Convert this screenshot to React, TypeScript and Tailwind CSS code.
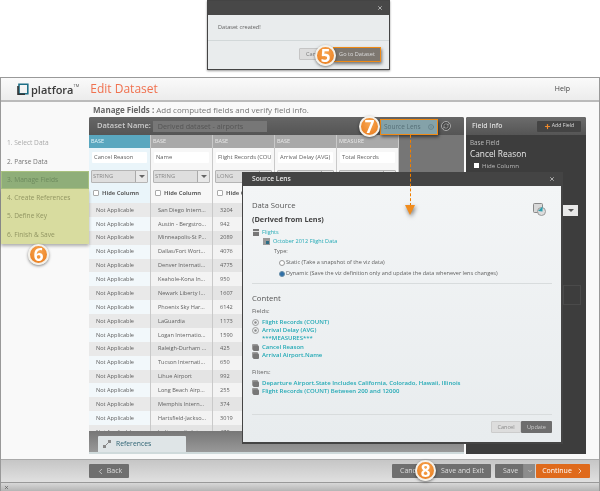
import { ChevronLeft, ChevronRight, ChevronDown, Plus, X, Info, RefreshCw } from "lucide-react";

const airports = [
  ["San Diego Intern...", "3204"],
  ["Austin - Bergstro...", "942"],
  ["Minneapolis-St P...", "2089"],
  ["Dallas/Fort Wort...", "4076"],
  ["Denver Internati...", "4775"],
  ["Keahole-Kona In...", "950"],
  ["Newark Liberty I...", "1607"],
  ["Phoenix Sky Har...", "6142"],
  ["LaGuardia", "1173"],
  ["Logan Internatio...", "1590"],
  ["Raleigh-Durham ...", "425"],
  ["Tucson Internati...", "650"],
  ["Lihue Airport", "992"],
  ["Long Beach Airp...", "255"],
  ["Memphis Intern...", "374"],
  ["Hartsfield-Jackso...", "3019"],
  ["Indianapolis Inte...", "478"],
];

const Badge = ({ n, className }: { n: number; className: string }) => (
  <div
    className={`absolute z-30 flex h-[21px] w-[21px] items-center justify-center rounded-full border-2 border-[#f4f1ea] bg-[radial-gradient(circle_at_50%_35%,#f8a651,#e8791a)] text-[17px] leading-none font-bold text-white shadow-[0_1px_3px_rgba(0,0,0,0.5)] ${className}`}
  >
    {n}
  </div>
);

const Stack = () => (
  <svg width="7" height="7" viewBox="0 0 7 7" className="shrink-0">
    <rect x="0" y="0" width="6" height="6" rx="1" fill="#9a9a9a" />
    <rect x="1" y="1.5" width="6" height="5.5" rx="1" fill="#777" />
  </svg>
);

const Measure = () => (
  <svg width="7" height="7" viewBox="0 0 7 7" className="shrink-0">
    <circle cx="3.5" cy="3.5" r="3" fill="none" stroke="#888" strokeWidth="0.8" />
    <circle cx="3.5" cy="3.5" r="1.2" fill="#888" />
  </svg>
);

const Column = ({ kind, name, type, active, cells }: { kind: string; name: string; type: string; active?: boolean; cells: string[] }) => (
  <div className={`flex w-[62px] shrink-0 flex-col border-r border-[#c9c9c9] ${active ? "bg-[#eaf5fa]" : "bg-[#f7f7f7]"}`}>
    <div className={`flex h-[13px] shrink-0 items-center px-[2px] text-[5.5px] ${active ? "bg-[#5aa7bf] text-[#e6f5f9]" : "bg-[#a9a9a9] text-[#e8e8e8]"}`}>
      {kind}
    </div>
    <div className="h-[4px] shrink-0" />
    <div className="mx-[3px] flex h-[11px] shrink-0 items-center overflow-hidden rounded-[1px] bg-white px-[2px] text-[5.8px] whitespace-nowrap text-[#5f5f5f]">
      {name}
    </div>
    <div className="h-[7px] shrink-0" />
    <div className="mx-[2px] flex h-[13px] shrink-0 items-center justify-between rounded-[1px] border border-[#b5b5b5] bg-[#dedede] pl-[1px] text-[5.8px] text-[#888]">
      {type}
      <span className="flex h-full w-[12px] items-center justify-center border-l border-[#aaa] bg-[#e8e8e8]">
        <span className="h-0 w-0 border-x-[3px] border-t-[3px] border-x-transparent border-t-[#666]" />
      </span>
    </div>
    <div className="flex h-[20px] shrink-0 items-center gap-[3px] px-[4px] text-[5.8px] font-bold text-[#5f5f5f]">
      <span className="h-[6px] w-[6px] rounded-[1px] border border-[#aaa] bg-white" />
      Hide Column
    </div>
    {cells.map((c, i) => (
      <div
        key={i}
        className={`flex h-[13.875px] shrink-0 items-center overflow-hidden pl-[7px] text-[5.6px] whitespace-nowrap text-[#5f5f5f] ${
          i % 2 === 0 ? (active ? "bg-[#e9e9e9]" : "bg-[#e4e4e4]") : active ? "bg-[#f2f8fb]" : "bg-[#f3f3f3]"
        }`}
      >
        {c}
      </div>
    ))}
  </div>
);

export default function App() {
  return (
    <div className="relative flex h-[491px] w-[600px] flex-col overflow-hidden bg-white font-['Open_Sans',sans-serif] blur-[0.4px]">
      {/* created dialog */}
      <div className="flex h-[77px] shrink-0 pl-[207px]">
        <div className="relative flex h-[70px] w-[183px] flex-col border border-[#444] bg-[#e9eced] shadow-[0_1px_2px_rgba(0,0,0,0.4)]">
          <div className="flex h-[14px] items-center justify-end bg-[#484848] pr-[6px]">
            <X size={6} className="text-[#ccc]" strokeWidth={3} />
          </div>
          <div className="flex h-[26px] items-center border-b border-[#d2d8d9] pl-[10px] text-[5.6px] text-[#5f5f5f]">Dataset created!</div>
          <div className="flex flex-1 items-start justify-end gap-[3px] pt-[6px] pr-[8px]">
            <div className="mt-[1px] flex h-[12px] w-[31px] items-center rounded-[1px] border border-[#c5c5c5] bg-[#ddd] pl-[6px] text-[5.6px] text-[#777]">Can</div>
            <div className="flex h-[15px] w-[48px] items-center justify-center border-[1.5px] border-[#f08a14] bg-[#7d7770] text-[5.6px] text-[#ddd] shadow-[1px_2px_3px_rgba(0,0,0,0.5)]">
              Go to Dataset
            </div>
          </div>
          <Badge n={5} className="top-[44px] left-[107px]" />
        </div>
      </div>

      {/* app window */}
      <div className="relative flex min-h-0 flex-1 flex-col border-x border-t border-[#999] bg-[#f9f9f9]">
        <header className="flex h-[24px] shrink-0 items-center justify-between border-b-2 border-[#bbb] bg-gradient-to-b from-[#fafafa] to-[#ececec] pr-[29px] pl-[16px]">
          <div className="flex items-center">
            <svg width="12" height="12" viewBox="0 0 12 12" className="mr-[2px]">
              <path d="M2 1.2H10.8V10.8H2Z" fill="none" stroke="#1e6f86" strokeWidth="1.6" />
              <path d="M1 3V11.2H8" fill="none" stroke="#333" strokeWidth="1.6" />
            </svg>
            <span className="text-[11px] leading-none font-semibold text-[#3a3a3a]">platfora</span>
            <span className="mb-[6px] text-[4px] text-[#555]">TM</span>
            <span className="ml-[11px] text-[12px] text-[#f0714f]">Edit Dataset</span>
          </div>
          <span className="text-[7px] text-[#444]">Help</span>
        </header>

        <div className="flex h-[357px] shrink-0">
          {/* steps */}
          <nav className="relative flex w-[88px] shrink-0 flex-col pt-[31px] text-[6.6px] text-[#8b8b8b]">
            <div className="flex h-[19px] shrink-0 items-center pl-[6px] text-[#aaa]">1. Select Data</div>
            <div className="flex h-[19px] shrink-0 items-center pl-[6px] text-[#777]">2. Parse Data</div>
            <div className="flex h-[18px] shrink-0 items-center border border-[#a9c17f] bg-[#8fae79] pl-[5px] text-[#6d8a5e]">3. Manage Fields</div>
            <div className="flex h-[55px] shrink-0 flex-col bg-[#d8dc9f] pl-[6px] text-[#919562] shadow-[0_2px_3px_rgba(0,0,0,0.3)]">
              <span className="flex h-[18px] items-center">4. Create References</span>
              <span className="flex h-[18px] items-center">5. Define Key</span>
              <span className="flex h-[19px] items-center">6. Finish &amp; Save</span>
            </div>
            <Badge n={6} className="top-[142px] left-[27px]" />
          </nav>

          {/* main */}
          <main className="flex min-h-0 min-w-0 flex-1 flex-col">
            <div className="flex h-[15px] shrink-0 items-center pl-[4px] text-[8px] whitespace-nowrap text-[#777]">
              <b className="mr-[2px] font-bold text-[#666]">Manage Fields :</b> Add computed fields and verify field info.
            </div>
            <div className="flex min-h-0 flex-1 gap-[2px] pb-[5px]">
              {/* dataset panel */}
              <section className="flex min-h-0 w-[375px] shrink-0 flex-col rounded-t-[2px] bg-[#767676]">
                <div className="relative flex h-[18px] shrink-0 items-center rounded-t-[2px] bg-gradient-to-b from-[#666] to-[#555] pl-[8px] text-[7.5px] font-semibold text-[#ccc]">
                  Dataset Name:
                  <span className="ml-[2px] flex h-[11px] w-[114px] items-center bg-[#777] pl-[5px] text-[7.2px] font-normal text-[#555]">Derived dataset - airports</span>
                  <div className="absolute top-[2px] left-[291px] flex h-[16px] w-[58px] items-center gap-[7px] border-[1.5px] border-[#f08a14] bg-[#84a2a9] pl-[3px] text-[6.5px] font-normal whitespace-nowrap text-[#567078] shadow-[1px_2px_3px_rgba(0,0,0,0.5)]">
                    Source Lens
                    <Info size={6} className="text-[#567078]" />
                  </div>
                  <span className="absolute top-[4px] left-[352px] flex h-[10px] w-[10px] items-center justify-center rounded-full border border-[#aaa] bg-[#444]">
                    <RefreshCw size={6} className="text-[#ccc]" />
                  </span>
                </div>
                <div className="flex min-h-0 flex-1 overflow-hidden">
                  <Column kind="BASE" name="Cancel Reason" type="STRING" active cells={airports.map(() => "Not Applicable")} />
                  <Column kind="BASE" name="Name" type="STRING" cells={airports.map((a) => a[0])} />
                  <Column kind="BASE" name="Flight Records (COU" type="LONG" cells={airports.map((a) => a[1])} />
                  <Column kind="BASE" name="Arrival Delay (AVG)" type="LONG" cells={[]} />
                  <Column kind="MEASURE" name="Total Records" type="LONG" cells={[]} />
                </div>
                <div className="flex h-[23px] shrink-0 items-end border-b-2 border-[#cfdadb] bg-gradient-to-b from-[#777] to-[#999] pl-[9px]">
                  <div className="flex h-[16px] w-[88px] items-center gap-[5px] rounded-t-[1px] bg-[#dfe5e7] pl-[5px] text-[6.8px] text-[#2f6474]">
                    <svg width="8" height="8" viewBox="0 0 8 8">
                      <rect x="0" y="5" width="3" height="3" fill="#888" />
                      <rect x="5" y="0" width="3" height="3" fill="#888" />
                      <path d="M2 6L6 2" stroke="#888" />
                    </svg>
                    References
                  </div>
                </div>
              </section>

              {/* field info */}
              <aside className="flex w-[120px] shrink-0 flex-col rounded-t-[2px] bg-[#3d3d3d] text-[#ddd]">
                <div className="flex h-[18px] shrink-0 items-center justify-between rounded-t-[2px] bg-gradient-to-b from-[#6c6c6c] to-[#555] pr-[5px] pl-[6px] text-[6.8px] font-semibold">
                  Field Info
                  <span className="flex h-[11px] w-[44px] items-center justify-center gap-[1px] rounded-[1px] bg-[#444] text-[5.2px] font-normal">
                    <Plus size={7} strokeWidth={4} className="text-[#f08a2b]" />
                    Add Field
                  </span>
                </div>
                <div className="px-[4px] pt-[3px]">
                  <p className="text-[6.3px] leading-[10px] text-[#bbb]">Base Field</p>
                  <p className="text-[8.3px] leading-[11px] text-[#e8e8e8]">Cancel Reason</p>
                  <p className="mt-[2px] flex items-center gap-[3px] pl-[4px] text-[6.1px] leading-[9px] text-[#bbb]">
                    <span className="h-[5px] w-[5px] bg-white" />
                    Hide Column
                  </p>
                </div>
              </aside>
            </div>
          </main>
        </div>

        <footer className="flex h-[23px] shrink-0 items-center justify-between border-t border-[#aaa] bg-gradient-to-b from-[#c6c6c6] to-[#e0e0e0] pr-[9px] pl-[88px] text-[7px] text-[#ddd]">
          <div className="flex h-[14px] w-[40px] items-center justify-center gap-[2px] rounded-[1px] bg-[#6f6f6f]">
            <ChevronLeft size={9} />
            Back
          </div>
          <div className="flex items-center">
            <div className="flex h-[14px] w-[99px] items-center rounded-[1px] bg-[#6f6f6f] pl-[8px] whitespace-nowrap">
              Canc
              <span className="ml-[25px]">Save and Exit</span>
            </div>
            <div className="ml-[4px] flex h-[14px] w-[40px] items-center rounded-[1px] bg-[#6f6f6f] pl-[8px]">
              Save
              <span className="ml-[5px] flex h-full flex-1 items-center justify-center border-l border-[#888] bg-[#8c8c8c]">
                <ChevronDown size={6} />
              </span>
            </div>
            <div className="ml-[1px] flex h-[14px] w-[54px] items-center justify-center gap-[4px] rounded-[1px] bg-[#df6a1c] text-white">
              Continue
              <ChevronRight size={8} />
            </div>
          </div>
        </footer>
        <div className="flex flex-1 items-center border-t border-[#999] bg-gradient-to-b from-[#d8d8d8] to-[#b5b5b5] pl-[3px]">
          <X size={5} className="text-[#555]" strokeWidth={3} />
        </div>
      </div>

      <Badge n={7} className="top-[116px] left-[359px]" />
      <Badge n={8} className="top-[460px] left-[415px]" />

      {/* source lens modal */}
      <div className="absolute top-[172px] left-[242px] z-10 flex h-[272px] w-[321px] flex-col bg-[#444] pr-[2px] pb-[2px] pl-[1px]">
        <div className="flex h-[14px] shrink-0 items-center justify-between pr-[6px] pl-[9px] text-[6.7px] font-semibold text-[#e8e8e8]">
          Source Lens
          <X size={6} className="text-[#ccc]" strokeWidth={3} />
        </div>
        <div className="relative flex flex-1 flex-col bg-gradient-to-b from-[#f3f5f6] to-[#e8ecee] px-[9px] pt-[14px] text-[5.55px] text-[#5f5f5f]">
          <p className="text-[7.7px] leading-[11px] text-[#555]">Data Source</p>
          <p className="mt-[3px] text-[7.3px] leading-[11px] font-bold text-[#444]">(Derived from Lens)</p>
          <p className="mt-[3px] flex h-[9px] items-center gap-[3px] pl-[1px] text-[#22a9b5]">
            <svg width="6" height="7" viewBox="0 0 6 7"><rect width="6" height="7" fill="#777" /><rect y="2" width="6" height="1" fill="#ddd" /></svg>
            Flights
          </p>
          <p className="flex h-[9px] items-center gap-[3px] pl-[11px] text-[#22a9b5]">
            <svg width="7" height="7" viewBox="0 0 7 7"><rect width="7" height="7" fill="#999" /><rect x="3" y="3" width="3" height="3" fill="#2c6d85" /></svg>
            October 2012 Flight Data
          </p>
          <p className="flex h-[10px] items-center pl-[22px]">Type:</p>
          <div className="mt-[1px] flex h-[11px] items-center pl-[27px] whitespace-nowrap">
            <span className="mr-[1px] h-[6px] w-[6px] rounded-full border border-[#999] bg-white" />
            Static (Take a snapshot of the viz data)
          </div>
          <div className="flex h-[11px] items-center pl-[27px] whitespace-nowrap">
            <span className="mr-[1px] h-[6px] w-[6px] rounded-full border border-[#6a8fa8] bg-[#2f6fa8]" />
            Dynamic (Save the viz definition only and update the data whenever lens changes)
          </div>
          <hr className="mt-[4px] border-[#d8dcdd]" />
          <p className="mt-[9px] text-[7.7px] leading-[11px] text-[#555]">Content</p>
          <p className="mt-[3px] text-[6px] leading-[9px]">Fields:</p>
          <ul className="mt-[2px] text-[6px] font-semibold text-[#22a9b5]">
            <li className="flex h-[8.3px] items-center gap-[3px]"><Measure />Flight Records (COUNT)</li>
            <li className="flex h-[8.3px] items-center gap-[3px]"><Measure />Arrival Delay (AVG)</li>
            <li className="flex h-[8.3px] items-center pl-[10px]">***MEASURES***</li>
            <li className="flex h-[8.3px] items-center gap-[3px]"><Stack />Cancel Reason</li>
            <li className="flex h-[8.3px] items-center gap-[3px]"><Stack />Arrival Airport.Name</li>
          </ul>
          <p className="mt-[9px] text-[6px] leading-[9px]">Filters:</p>
          <ul className="mt-[2px] text-[6px] font-semibold text-[#22a9b5]">
            <li className="flex h-[8.3px] items-center gap-[3px]"><Stack />Departure Airport.State Includes California, Colorado, Hawaii, Illinois</li>
            <li className="flex h-[8.3px] items-center gap-[3px]"><Stack />Flight Records (COUNT) Between 200 and 12000</li>
          </ul>
          <hr className="mt-[18px] border-[#d8dcdd]" />
          <div className="mt-[6px] flex justify-end">
            <span className="flex h-[12px] w-[30px] items-center justify-center rounded-[1px] border border-[#ccc] bg-[#ddd] text-[#888]">Cancel</span>
            <span className="flex h-[12px] w-[31px] items-center justify-center rounded-[1px] bg-[#6d6d6d] text-[#ccc]">Update</span>
          </div>
          <svg width="13" height="13" viewBox="0 0 13 13" className="absolute top-[17px] right-[15px]">
            <rect x="0.5" y="0.5" width="9" height="9" rx="1" fill="#d8d8d8" stroke="#888" />
            <circle cx="8.5" cy="8.5" r="4" fill="#ddd" stroke="#999" />
            <path d="M5 8L9.5 3.5V8.5Z" fill="#2a9fb0" />
          </svg>
        </div>
      </div>

      {/* dropdown peeking beside the modal */}
      <div className="absolute top-[205px] left-[563px] flex h-[11px] w-[15px] items-center justify-center bg-[#e8e8e8]">
        <span className="h-0 w-0 border-x-[3px] border-t-[3px] border-x-transparent border-t-[#555]" />
      </div>
      <div className="absolute top-[285px] left-[563px] h-[20px] w-[18px] border border-[#4a4a4a]" />

      {/* arrow from source lens */}
      <div className="absolute top-[135px] left-[410px] z-20 h-[71px] border-l border-dashed border-[#f07f00]" />
      <div className="absolute top-[205px] left-[405px] z-20 h-0 w-0 border-x-[5.5px] border-t-[10px] border-x-transparent border-t-[#f08c1e] drop-shadow-[1px_2px_2px_rgba(0,0,0,0.5)]" />
    </div>
  );
}
